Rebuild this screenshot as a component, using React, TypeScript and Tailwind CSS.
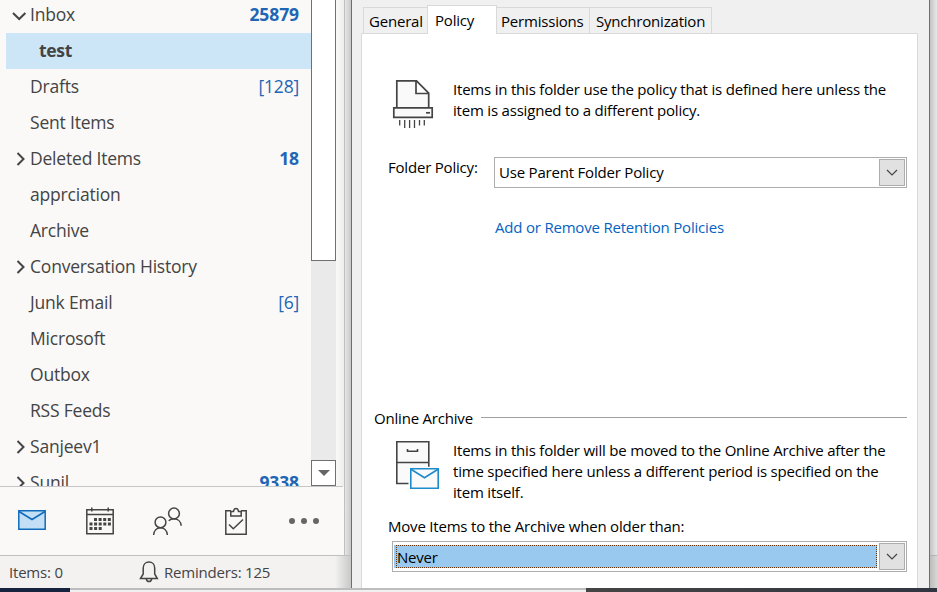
import type { ReactNode } from 'react'

type Folder = {
  name: string
  count?: string
  bold?: boolean
  arrow?: 'open' | 'closed'
  selected?: boolean
  tracking: string
}

const folders: Folder[] = [
  { name: 'Inbox', count: '25879', bold: true, arrow: 'open', tracking: 'tracking-[-0.2px]' },
  { name: 'test', selected: true, tracking: 'tracking-[-0.3px]' },
  { name: 'Drafts', count: '[128]', tracking: 'tracking-[-0.2px]' },
  { name: 'Sent Items', tracking: 'tracking-[-0.2px]' },
  { name: 'Deleted Items', count: '18', bold: true, arrow: 'closed', tracking: 'tracking-[-0.2px]' },
  { name: 'apprciation', tracking: 'tracking-[-0.2px]' },
  { name: 'Archive', tracking: 'tracking-[-0.2px]' },
  { name: 'Conversation History', arrow: 'closed', tracking: 'tracking-[-0.2px]' },
  { name: 'Junk Email', count: '[6]', tracking: 'tracking-[-0.2px]' },
  { name: 'Microsoft', tracking: 'tracking-[-0.2px]' },
  { name: 'Outbox', tracking: 'tracking-[-0.2px]' },
  { name: 'RSS Feeds', tracking: 'tracking-[-0.2px]' },
  { name: 'Sanjeev1', arrow: 'closed', tracking: 'tracking-[-0.2px]' },
  { name: 'Sunil', count: '9338', bold: true, arrow: 'closed', tracking: 'tracking-[-0.2px]' },
]

function Arrow({ kind }: { kind?: 'open' | 'closed' }) {
  return (
    <svg width="24" height="36" viewBox="0 0 24 36" fill="none" stroke="#444" strokeWidth="2" className="shrink-0">
      {kind === 'open' && <path d="M7 17l6.2 6 6.2-6" />}
      {kind === 'closed' && <path d="M11.5 13l6 6-6 6" />}
    </svg>
  )
}

function FolderRow({ folder }: { folder: Folder }) {
  return (
    <div className={`ml-1.5 flex h-9 shrink-0 items-center pr-3 pb-0.5 ${folder.selected ? 'bg-[#cde6f7]' : ''}`}>
      <Arrow kind={folder.arrow} />
      <span className={`whitespace-nowrap ${folder.tracking} ${folder.selected ? 'pl-[9px] font-bold' : ''}`}>{folder.name}</span>
      <span className={`ml-auto text-[#1f66b5] ${folder.bold ? 'font-bold tracking-[-0.1px]' : 'tracking-[-0.2px]'}`}>{folder.count}</span>
    </div>
  )
}

function Scrollbar() {
  return (
    <div className="flex w-[25px] shrink-0 flex-col bg-[#eaeaea]">
      <div className="h-[261px] border border-t-0 border-[#707070] bg-white" />
      <div className="mt-[199px] flex h-[26px] items-center justify-center border border-[#707070] bg-white">
        <svg width="12" height="6" viewBox="0 0 12 6">
          <path d="M0 0h12L6 6z" fill="#666" />
        </svg>
      </div>
    </div>
  )
}

function NavBar() {
  return (
    <div className="h-[69px] w-[343px] border-t border-[#c6c6c6]">
      <svg width="343" height="68" viewBox="0 487 343 68" fill="none" stroke="#444" strokeWidth="1.5">
        {/* mail */}
        <g stroke="#0f6cbd">
          <path d="M18.8 510.8h26.4v18.4H18.8z" fill="#c3dff5" />
          <path d="M19 511.500l13 8 13-8" />
        </g>
        {/* calendar */}
        <path d="M86.800 509.800h26.400v24H86.800zM86.800 514.500h26.400M91.800 507.500v4M108.200 507.500v4" />
        <path d="M94 519.500h17M89.500 524h21.500M89.500 528.500h13" strokeWidth="3" strokeDasharray="3 1.600" />
        {/* people */}
        <circle cx="160.500" cy="522.300" r="5.400" />
        <path d="M153.600 535c.3-4.300 3.200-7.200 6.900-7.200s6.600 2.900 6.900 7.200" />
        <circle cx="174" cy="513.500" r="5.400" />
        <path d="M168.700 520.800c1.200-1.200 3.200-2 5.300-2 3.900 0 6.900 2.700 7.200 7" />
        {/* tasks */}
        <path d="M231 510.800h-5.200v23.400h20.400v-23.400H241" />
        <path d="M230.800 511.500h2.700c.2-1.800 1.100-3 2.500-3s2.300 1.200 2.500 3h2.700v4.500h-10.400z" />
        <path d="M229 524.500l4.300 4.300 9.700-9.300" />
        {/* more */}
        <g fill="#666" stroke="none">
          <circle cx="292" cy="521" r="3" />
          <circle cx="304" cy="521" r="3" />
          <circle cx="316" cy="521" r="3" />
        </g>
      </svg>
    </div>
  )
}

function MailPane() {
  return (
    <div className="flex w-[351px] shrink-0 flex-col bg-[#faf9f8] text-[#444]">
      <div className="flex h-[555px]">
        <div className="flex w-[344px] flex-col">
          <div className="flex h-[486px] overflow-hidden">
            <div className="-mt-[3px] flex w-[311px] flex-col text-[17.5px] leading-6">
              {folders.map((f) => (
                <FolderRow key={f.name} folder={f} />
              ))}
            </div>
            <Scrollbar />
            <div className="flex-1 bg-linear-to-r from-[#faf9f8] to-[#eeeeed]" />
          </div>
          <NavBar />
        </div>
        <div className="w-[7px] border-l border-[#c0c0c0] bg-linear-to-r from-[#e6e6e6] to-[#c8c8c8]" />
      </div>
      <div className="flex h-[33px] items-center border-t border-[#c0c0c0] bg-[#f3f2f1] text-[15px]">
        <span className="w-[139px] pl-[9px] tracking-[-0.2px]">Items: 0</span>
        <svg width="20" height="24" viewBox="0 0 20 24" fill="none" stroke="#444" strokeWidth="1.500">
          <path d="M1.500 18.500h16.800l-2.600-4.500V8c0-3.500-2.400-6-5.700-6S4.200 4.500 4.200 8v6zM7.300 19c.3 1.600 1.300 2.500 2.700 2.500s2.400-.9 2.700-2.500" />
        </svg>
        <span className="pl-[5px] tracking-[-0.2px]">Reminders: 125</span>
        <span className="ml-auto h-full w-4 bg-linear-to-r from-[#f3f2f1] to-[#c8c8c8]" />
      </div>
    </div>
  )
}

function Tab({ className, children }: { className: string; children: ReactNode }) {
  return <div className={`flex items-center whitespace-nowrap border border-[#d9d9d9] ${className}`}>{children}</div>
}

function DropButton() {
  return (
    <div className="m-px flex w-[26px] shrink-0 items-center justify-center border border-[#adadad] bg-[#e1e1e1]">
      <svg width="12" height="8" viewBox="0 0 12 8" fill="none" stroke="#444" strokeWidth="1.200">
        <path d="M1 1l5 5 5-5" />
      </svg>
    </div>
  )
}

function ShredderIcon() {
  return (
    <svg width="42" height="50" viewBox="392 80 42 50" fill="#fafafa" stroke="#444" strokeWidth="1.700" className="shrink-0">
      <path d="M396.800 108V81.800h19.700l12.200 12.400V108M416 82v12.500h12.500" />
      <path d="M393.800 108.800h38.400v9.600h-38.400z" />
      <path d="M426 113.800h4" />
      <path d="M399.700 121v5.500M404.700 121v8M409.600 121v8M414.500 121v8M419.500 121v5.500M424.300 121v5.500" strokeWidth="1.300" transform="translate(0 0)" />
    </svg>
  )
}

function ArchiveIcon() {
  return (
    <svg width="44" height="50" viewBox="396 441 44 50" fill="#fafafa" stroke="#444" strokeWidth="1.600" className="shrink-0">
      <path d="M408.500 484.500h-11.700v-41.700h32v25M396.800 463.500h32M407.500 450v2.200h10V450" />
      <g stroke="#1e8bcd">
        <path d="M410.800 469.800h27.400v19.400h-27.400z" />
        <path d="M411 470.200l13.500 8.500 13.500-8.500" fill="none" />
      </g>
    </svg>
  )
}

function PolicyDialog() {
  return (
    <div className="flex w-[579px] shrink-0 flex-col border-x border-[#6e6e6e] bg-[#f0f0f0] pl-[9px] pr-[11px] text-[15px] leading-[21px] text-black">
      <div className="-mb-px flex h-[29px] mt-[5px] items-end pl-[2px]">
        <Tab className="h-[27px] w-[64px] border-r-0 pl-[5px] pt-0.5 tracking-[-0.2px]">General</Tab>
        <Tab className="z-10 h-[29px] w-[70px] border-b-0 bg-white pl-[7px] tracking-[-0.2px]">Policy</Tab>
        <Tab className="h-[27px] w-[93px] border-l-0 pl-1 pt-0.5 tracking-[-0.2px]">Permissions</Tab>
        <Tab className="h-[27px] w-[122px] border-l-0 pl-1.5 pt-0.5 tracking-[-0.2px]">Synchronization</Tab>
      </div>
      <div className="flex h-[555px] flex-col border border-b-0 border-[#d9d9d9] bg-white pr-[10px]">
        <div className="mt-[45px] flex h-[50px] pl-[30px]">
          <ShredderIcon />
          <div className="whitespace-nowrap pl-[19px]">
            <p className="tracking-[-0.2px]">Items in this folder use the policy that is defined here unless the</p>
            <p className="tracking-[-0.2px]">item is assigned to a different policy.</p>
          </div>
        </div>
        <div className="mt-[28px] flex h-[31px] pl-[26px]">
          <span className="w-[106px] whitespace-nowrap tracking-[-0.2px]">Folder Policy:</span>
          <div className="flex flex-1 border border-[#adadad]">
            <span className="flex-1 pl-1 pt-1 tracking-[-0.2px]">Use Parent Folder Policy</span>
            <DropButton />
          </div>
        </div>
        <a className="mt-[29px] pl-[133px] tracking-[-0.2px] text-[#0563c1]">Add or Remove Retention Policies</a>
        <div className="mt-[170px] flex items-center pl-3">
          <span className="w-[107px] whitespace-nowrap tracking-[-0.2px]">Online Archive</span>
          <div className="mb-0.5 h-px flex-1 bg-[#a0a0a0]" />
        </div>
        <div className="mt-[11px] flex h-[63px] pl-[34px]">
          <ArchiveIcon />
          <div className="whitespace-nowrap pl-[13px]">
            <p className="tracking-[-0.2px]">Items in this folder will be moved to the Online Archive after the</p>
            <p className="tracking-[-0.2px]">time specified here unless a different period is specified on the</p>
            <p className="tracking-[-0.2px]">item itself.</p>
          </div>
        </div>
        <p className="mt-[13px] pl-[26px] tracking-[-0.2px]">Move Items to the Archive when older than:</p>
        <div className="ml-[30px] mt-1 flex h-[31px] border border-[#adadad]">
          <div className="my-[3px] ml-px mr-px flex flex-1 items-center bg-[#99c9ef] pl-0.5">
            <span className="h-full flex-1 border border-dotted border-[#663610] leading-[22px] tracking-[-0.2px]">Never</span>
          </div>
          <DropButton />
        </div>
      </div>
    </div>
  )
}

export default function App() {
  return (
    <div className="flex h-[592px] w-[937px] flex-col overflow-hidden font-['Open_Sans',sans-serif]">
      <div className="flex h-[588px] overflow-hidden">
        <MailPane />
        <PolicyDialog />
        <div className="flex flex-1 flex-col bg-linear-to-r from-[#c4c4c4] to-[#e8e8e8]">
          <div className="mt-[555px] h-[33px] border-t border-[#b4b4b4] bg-linear-to-r from-[#bbb] to-[#d8d8d6]" />
        </div>
      </div>
      <div className="flex h-1">
        <div className="w-[70px] bg-[#16233f]" />
        <div className="w-[516px] border-t-2 border-[#bdbdbd] bg-[#f0f0f0]" />
        <div className="flex-1 bg-linear-to-r from-[#454545] to-[#303540]" />
      </div>
    </div>
  )
}
